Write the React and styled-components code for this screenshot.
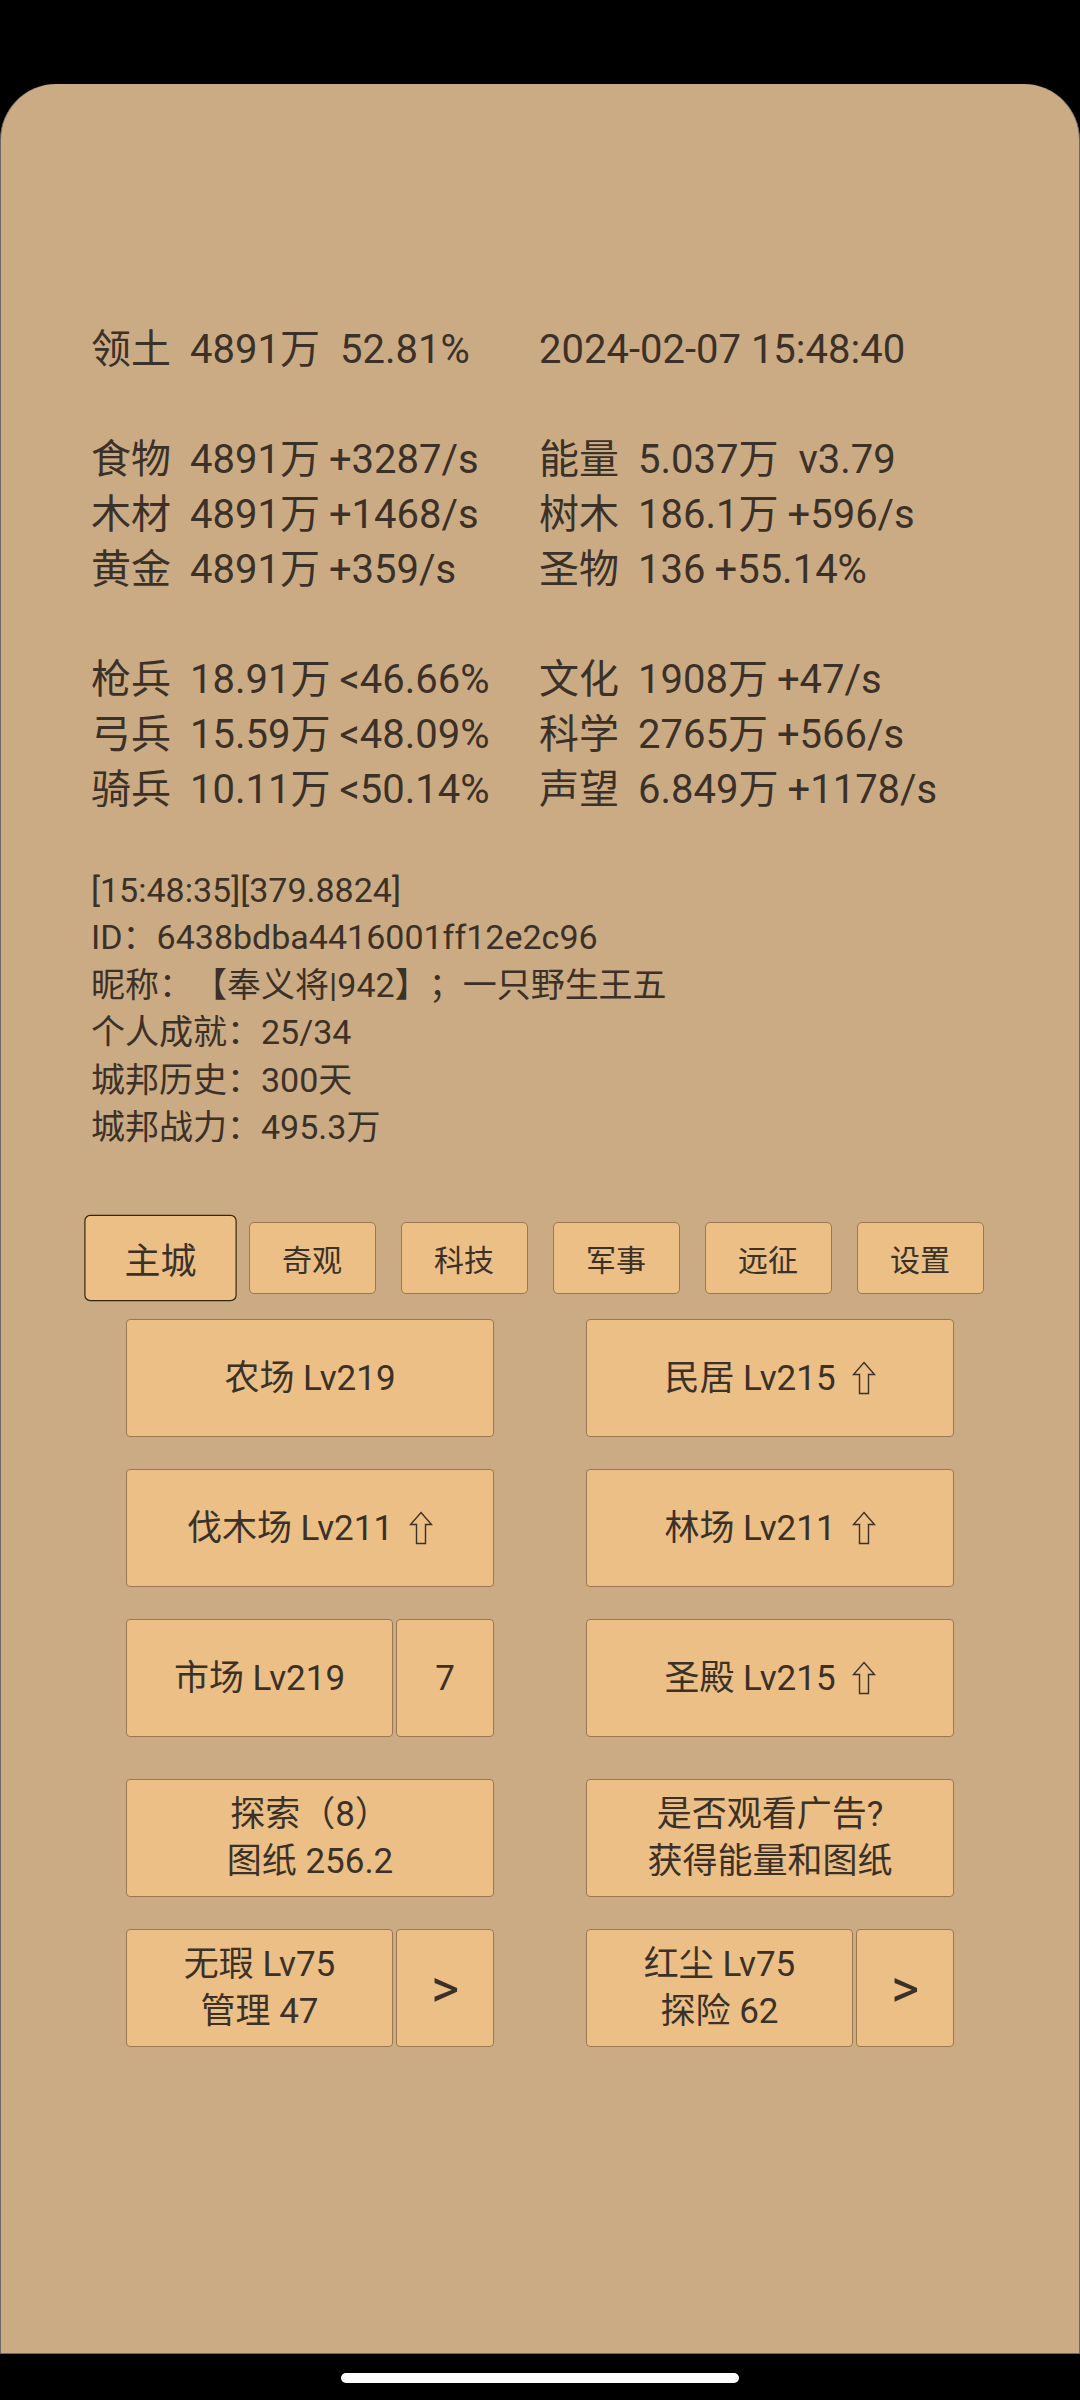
import React from "react";
import styled, { createGlobalStyle } from "styled-components";

const GlobalStyle = createGlobalStyle`
  html, body {
    margin: 0;
    padding: 0;
    background: #000;
  }
  * {
    box-sizing: border-box;
  }
`;

const stats = [
  [
    { label: "领土", parts: ["4891万", "52.81%"], wide: true, right: { parts: ["2024-02-07 15:48:40"], bare: true } },
  ],
  [
    { label: "食物", parts: ["4891万", "+3287/s"], right: { label: "能量", parts: ["5.037万", "v3.79"], wide: true } },
    { label: "木材", parts: ["4891万", "+1468/s"], right: { label: "树木", parts: ["186.1万", "+596/s"] } },
    { label: "黄金", parts: ["4891万", "+359/s"], right: { label: "圣物", parts: ["136", "+55.14%"] } },
  ],
  [
    { label: "枪兵", parts: ["18.91万", "<46.66%"], right: { label: "文化", parts: ["1908万", "+47/s"] } },
    { label: "弓兵", parts: ["15.59万", "<48.09%"], right: { label: "科学", parts: ["2765万", "+566/s"] } },
    { label: "骑兵", parts: ["10.11万", "<50.14%"], right: { label: "声望", parts: ["6.849万", "+1178/s"] } },
  ],
];

const info = [
  "[15:48:35][379.8824]",
  "ID：6438bdba4416001ff12e2c96",
  "昵称：【奉义将|942】；一只野生王五",
  "个人成就：25/34",
  "城邦历史：300天",
  "城邦战力：495.3万",
];

const tabs = ["主城", "奇观", "科技", "军事", "远征", "设置"];

function Stat({ label, parts, wide, bare }) {
  return (
    <Cell>
      {!bare && <Label>{label}</Label>}
      {parts.map((p, i) => (
        <Part key={i} $gap={i === 0 ? 0 : wide ? 20 : 9}>{p}</Part>
      ))}
    </Cell>
  );
}

function UpArrow() {
  return (
    <ArrowIcon viewBox="0 0 24 34" width="24" height="34">
      <path
        d="M12 1.5 L22.5 13.5 L16.5 13.5 L16.5 32.5 L7.5 32.5 L7.5 13.5 L1.5 13.5 Z"
        fill="none"
        stroke="#3b3128"
        strokeWidth="1.4"
      />
    </ArrowIcon>
  );
}

export default function App() {
  return (
    <>
      <GlobalStyle />
      <Screen>
        <StatusArea />
        <Card>
          <Stats>
            {stats.map((group, gi) => (
              <Group key={gi} $first={gi === 0}>
                {group.map((row, ri) => (
                  <StatRow key={ri}>
                    <Stat {...row} />
                    <Stat {...row.right} />
                  </StatRow>
                ))}
              </Group>
            ))}
          </Stats>

          <Info>
            {info.map((line) => (
              <InfoLine key={line}>{line}</InfoLine>
            ))}
          </Info>

          <Tabs>
            {tabs.map((t, i) => (
              <Tab key={t} $active={i === 0}>{t}</Tab>
            ))}
          </Tabs>

          <ButtonGrid $top={25}>
            <Btn>农场 Lv219</Btn>
            <Btn>民居 Lv215<UpArrow /></Btn>
            <Btn>伐木场 Lv211<UpArrow /></Btn>
            <Btn>林场 Lv211<UpArrow /></Btn>
            <Split>
              <Btn>市场 Lv219</Btn>
              <Btn>7</Btn>
            </Split>
            <Btn>圣殿 Lv215<UpArrow /></Btn>
          </ButtonGrid>

          <ButtonGrid $top={42}>
            <Btn>探索（8）<br />图纸 256.2</Btn>
            <Btn>是否观看广告?<br />获得能量和图纸</Btn>
            <Split>
              <Btn>无瑕 Lv75<br />管理 47</Btn>
              <Btn $big>&gt;</Btn>
            </Split>
            <Split>
              <Btn>红尘 Lv75<br />探险 62</Btn>
              <Btn $big>&gt;</Btn>
            </Split>
          </ButtonGrid>
        </Card>
        <NavArea>
          <HomeBar />
        </NavArea>
      </Screen>
    </>
  );
}

const Screen = styled.div`
  width: 1080px;
  height: 2400px;
  display: flex;
  flex-direction: column;
  background: #000;
  font-family: "Roboto", "Noto Sans CJK SC", "DejaVu Sans", sans-serif;
  color: #3b3128;
  text-spacing-trim: space-all;
`;

const StatusArea = styled.div`
  height: 84px;
  flex-shrink: 0;
`;

const Card = styled.div`
  flex: 1;
  background: #cbab84;
  border-radius: 56px 56px 0 0;
  border: 1.5px solid #6c6862;
  border-top: none;
  padding-top: 238px;
`;

const Stats = styled.div`
  padding-left: 90px;
  font-size: 40px;
  line-height: 55px;
`;

const Group = styled.div`
  margin-top: ${({ $first }) => ($first ? 0 : 55)}px;
`;

const StatRow = styled.div`
  display: grid;
  grid-template-columns: 448px 1fr;
  white-space: pre;
`;

const Cell = styled.div`
  display: flex;
`;

const Label = styled.span`
  width: 99px;
  flex-shrink: 0;
`;

const Part = styled.span`
  margin-left: ${({ $gap }) => $gap}px;
`;

const Info = styled.div`
  margin-top: 50px;
  padding-left: 90px;
  font-size: 34px;
  line-height: 47.4px;
`;

const InfoLine = styled.div`
  white-space: pre;
`;

const Tabs = styled.div`
  margin-top: 71px;
  display: flex;
  justify-content: center;
  gap: 25px;
`;

const Tab = styled.div`
  width: 127px;
  height: 72px;
  display: flex;
  align-items: center;
  justify-content: center;
  background: #ebbf85;
  border: ${({ $active }) => ($active ? "1.6px solid #35260f" : "1px solid #9c7852")};
  border-radius: 5px;
  font-size: 30px;
  transform: ${({ $active }) => ($active ? "scale(1.2)" : "none")};
`;

const ButtonGrid = styled.div`
  margin: ${({ $top }) => $top}px auto 0;
  width: 828px;
  display: grid;
  grid-template-columns: 368px 368px;
  column-gap: 92px;
  row-gap: 32px;
  grid-auto-rows: 118px;
`;

const Btn = styled.div`
  display: flex;
  align-items: center;
  justify-content: center;
  text-align: center;
  background: #ebbf85;
  border: 1px solid #9c7852;
  border-radius: 4px;
  font-size: ${({ $big }) => ($big ? 54 : 35)}px;
  line-height: 47.5px;
`;

const Split = styled.div`
  display: grid;
  grid-template-columns: 267px 1fr;
  gap: 3px;
`;

const ArrowIcon = styled.svg`
  margin-left: 16px;
  flex-shrink: 0;
`;

const NavArea = styled.div`
  height: 46px;
  flex-shrink: 0;
  display: flex;
  justify-content: center;
  padding-top: 19px;
`;

const HomeBar = styled.div`
  width: 398px;
  height: 10px;
  border-radius: 5px;
  background: #fff;
`;
